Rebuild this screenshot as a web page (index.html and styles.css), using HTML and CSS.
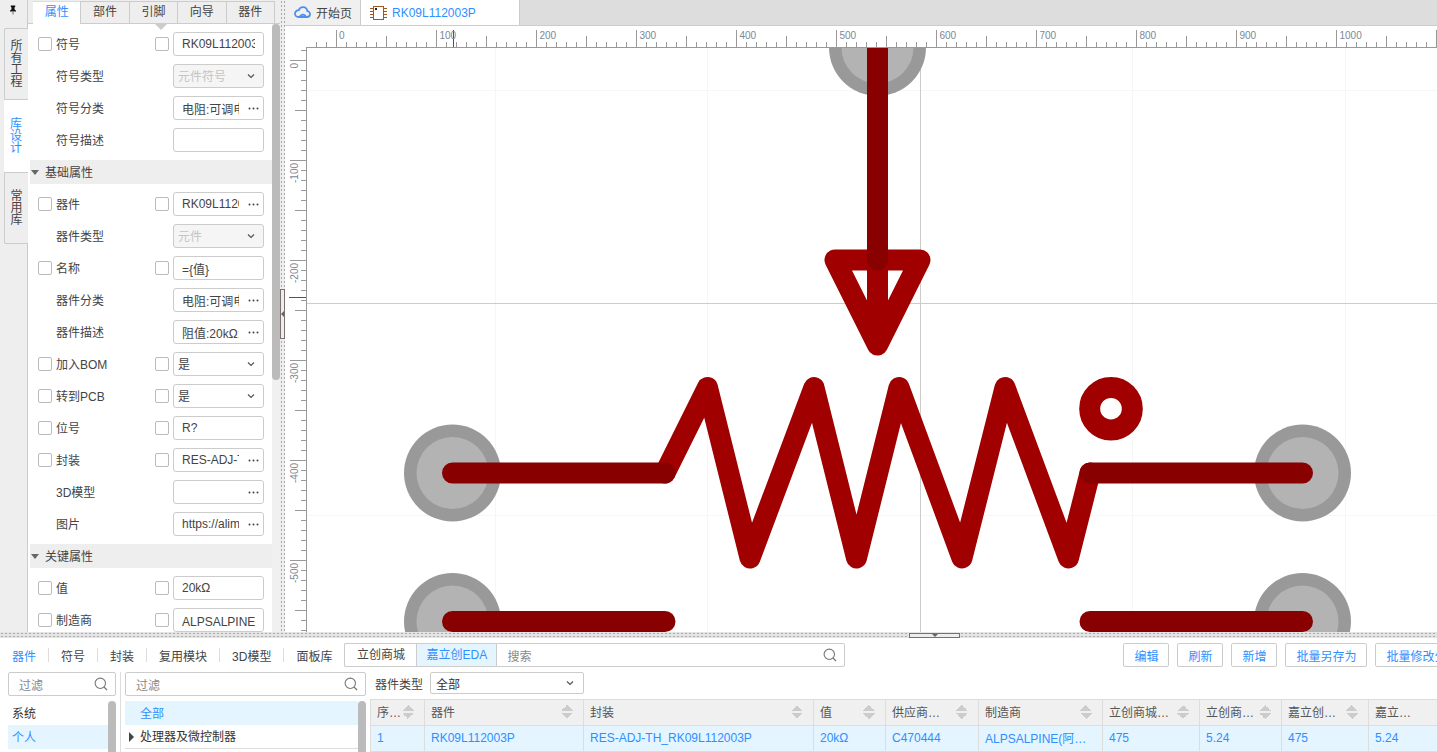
FILE: index.html
```html
<!DOCTYPE html>
<html lang="zh-CN">
<head>
    <meta charset="UTF-8">
    <title>RK09L112003P</title>
    <link rel="stylesheet" href="styles.css">
</head>
<body>
    <svg class="sprites" aria-hidden="true">
        <symbol id="chevron" viewBox="0 0 8 6"><path d="M1 1.5 4 4.5 7 1.5" fill="none" stroke="#555" stroke-width="1.2"/></symbol>
        <symbol id="dots" viewBox="0 0 11 3"><circle cx="1.5" cy="1.5" r="1" fill="#444"/><circle cx="5.5" cy="1.5" r="1" fill="#444"/><circle cx="9.5" cy="1.5" r="1" fill="#444"/></symbol>
        <symbol id="search" viewBox="0 0 14 14"><circle cx="6.3" cy="6.3" r="5.2" fill="none" stroke="#777" stroke-width="1.1"/><path d="M10 10 13 13" stroke="#777" stroke-width="1.3"/></symbol>
    </svg>

    <div class="top">
        <div class="rail">
            <div class="pin">
                <svg width="6" height="10" viewBox="0 0 8 12"><path d="M1 0H7V1.5L6 2.5V5L8 7V8H0V7L2 5V2.5L1 1.5Z" fill="#111"/><rect x="3" y="8" width="2" height="4" fill="#999"/></svg>
            </div>
            <div class="rail-tab">所有工程</div>
            <div class="rail-tab active">库设计</div>
            <div class="rail-tab">常用库</div>
        </div>

        <div class="props">
            <div class="props-tabs">
                <div class="ptab active">属性</div>
                <div class="ptab">部件</div>
                <div class="ptab">引脚</div>
                <div class="ptab">向导</div>
                <div class="ptab">器件</div>
            </div>
            <div class="tab-caret"></div>
            <div class="props-scroll"><div class="props-thumb"></div></div>
            <div class="props-body">
                <div class="row"><span class="cb"></span><span class="lbl">符号</span><span class="cb cb2"></span><div class="field"><span class="val wide">RK09L112003P</span></div></div>
                <div class="row"><span class="lbl">符号类型</span><div class="field disabled"><span class="val sel">元件符号</span><svg class="chev"><use href="#chevron"/></svg></div></div>
                <div class="row"><span class="lbl">符号分类</span><div class="field"><span class="val">电阻:可调电位器</span><svg class="dots"><use href="#dots"/></svg></div></div>
                <div class="row"><span class="lbl">符号描述</span><div class="field"></div></div>

                <div class="section"><i class="tri"></i><span>基础属性</span></div>
                <div class="row"><span class="cb"></span><span class="lbl">器件</span><span class="cb cb2"></span><div class="field"><span class="val">RK09L112003P</span><svg class="dots"><use href="#dots"/></svg></div></div>
                <div class="row"><span class="lbl">器件类型</span><div class="field disabled"><span class="val sel">元件</span><svg class="chev"><use href="#chevron"/></svg></div></div>
                <div class="row"><span class="cb"></span><span class="lbl">名称</span><span class="cb cb2"></span><div class="field"><span class="val wide">={值}</span></div></div>
                <div class="row"><span class="lbl">器件分类</span><div class="field"><span class="val">电阻:可调电位器</span><svg class="dots"><use href="#dots"/></svg></div></div>
                <div class="row"><span class="lbl">器件描述</span><div class="field"><span class="val">阻值:20kΩ;功率</span><svg class="dots"><use href="#dots"/></svg></div></div>
                <div class="row"><span class="cb"></span><span class="lbl">加入BOM</span><span class="cb cb2"></span><div class="field"><span class="val sel">是</span><svg class="chev"><use href="#chevron"/></svg></div></div>
                <div class="row"><span class="cb"></span><span class="lbl">转到PCB</span><span class="cb cb2"></span><div class="field"><span class="val sel">是</span><svg class="chev"><use href="#chevron"/></svg></div></div>
                <div class="row"><span class="cb"></span><span class="lbl">位号</span><span class="cb cb2"></span><div class="field"><span class="val wide">R?</span></div></div>
                <div class="row"><span class="cb"></span><span class="lbl">封装</span><span class="cb cb2"></span><div class="field"><span class="val">RES-ADJ-TH_RK09</span><svg class="dots"><use href="#dots"/></svg></div></div>
                <div class="row"><span class="lbl">3D模型</span><div class="field"><span class="val"></span><svg class="dots"><use href="#dots"/></svg></div></div>
                <div class="row"><span class="lbl">图片</span><div class="field"><span class="val">https://alimg.szlcsc.com</span><svg class="dots"><use href="#dots"/></svg></div></div>

                <div class="section"><i class="tri"></i><span>关键属性</span></div>
                <div class="row"><span class="cb"></span><span class="lbl">值</span><span class="cb cb2"></span><div class="field"><span class="val wide">20kΩ</span></div></div>
                <div class="row"><span class="cb"></span><span class="lbl">制造商</span><span class="cb cb2"></span><div class="field"><span class="val wide">ALPSALPINE(阿尔卑斯)</span></div></div>
            </div>
        </div>

        <div class="vsplit"><div class="vhandle"><i></i></div></div>

        <div class="editor">
            <div class="doc-tabs">
                <div class="doc-tab">
                    <svg width="17" height="13" viewBox="0 0 17 13"><path d="M4.5 11H13C15 11 16 9.6 16 8 16 6.4 14.8 5.2 13.4 5.2 13 2.8 11.2 1.2 9 1.2 7 1.2 5.4 2.4 4.8 4.2 2.6 4.2 1 5.8 1 7.8 1 9.6 2.6 11 4.5 11 6.4 11 7.2 8.6 9 8.6 10.4 8.6 10.8 9.6 11.6 10" fill="none" stroke="#4d8ff0" stroke-width="1.8" stroke-linecap="round"/></svg>
                    <span>开始页</span>
                </div>
                <div class="doc-tab active">
                    <svg width="17" height="14" viewBox="0 0 17 14"><rect x="3.5" y="0.5" width="10" height="13" fill="#fff" stroke="#a5561c"/><rect x="5" y="2" width="2" height="2" fill="#222"/><path d="M0 2.5H3M0 5.5H3M0 8.5H3M0 11.5H3M14 2.5H17M14 5.5H17M14 8.5H17M14 11.5H17" stroke="#a5561c"/></svg>
                    <span>RK09L112003P</span>
                </div>
            </div>
            <div class="canvas">
                <svg class="sheet" width="1152" height="606" viewBox="285 26 1152 606">
                    <defs>
                        <pattern id="htick" patternUnits="userSpaceOnUse" x="336" y="30" width="100" height="17">
                            <rect x="0" y="0" width="1" height="17"/><rect x="10" y="12" width="1" height="5"/><rect x="20" y="12" width="1" height="5"/><rect x="30" y="12" width="1" height="5"/><rect x="40" y="12" width="1" height="5"/><rect x="50" y="6" width="1" height="11"/><rect x="60" y="12" width="1" height="5"/><rect x="70" y="12" width="1" height="5"/><rect x="80" y="12" width="1" height="5"/><rect x="90" y="12" width="1" height="5"/>
                        </pattern>
                        <pattern id="vtick" patternUnits="userSpaceOnUse" x="290" y="60" width="16" height="100">
                            <rect x="0" y="0" width="16" height="1"/><rect x="11" y="10" width="5" height="1"/><rect x="11" y="20" width="5" height="1"/><rect x="11" y="30" width="5" height="1"/><rect x="11" y="40" width="5" height="1"/><rect x="5" y="50" width="11" height="1"/><rect x="11" y="60" width="5" height="1"/><rect x="11" y="70" width="5" height="1"/><rect x="11" y="80" width="5" height="1"/><rect x="11" y="90" width="5" height="1"/>
                        </pattern>
                    </defs>

                    <!-- grid -->
                    <path d="M495.5 48V632M707.5 48V632M1132.5 48V632M1345.5 48V632M307 90.5H1437M307 515.5H1437" stroke="#f6f6f6"/>
                    <path d="M920.5 48V632M307 303.5H1437" stroke="#ccc"/>

                    <!-- pads -->
                    <g class="pad"><circle cx="877.5" cy="47.5" r="48.5"/><circle class="pad-in" cx="877.5" cy="47.5" r="36"/></g>
                    <g class="pad"><circle cx="452.5" cy="473" r="48.5"/><circle class="pad-in" cx="452.5" cy="473" r="36"/></g>
                    <g class="pad"><circle cx="1302.5" cy="473" r="48.5"/><circle class="pad-in" cx="1302.5" cy="473" r="36"/></g>
                    <g class="pad"><circle cx="452.5" cy="621.5" r="48.5"/><circle class="pad-in" cx="452.5" cy="621.5" r="36"/></g>
                    <g class="pad"><circle cx="1302.5" cy="621.5" r="48.5"/><circle class="pad-in" cx="1302.5" cy="621.5" r="36"/></g>

                    <!-- symbol -->
                    <g class="wire">
                        <path d="M835 260H920L877.5 345ZM877.5 260V345"/>
                        <path d="M665 473 707.5 387.5 750 558 814 387.5 856.5 558 899 387.5 962 558 1005 387.5 1068.5 558 1090 473"/>
                        <circle cx="1111" cy="408.7" r="21.3"/>
                    </g>
                    <g class="pin-line">
                        <path d="M877.5 40V260M452.5 473H665M1090 473H1302.5M452.5 621.5H665M1090 621.5H1302.5"/>
                    </g>

                    <!-- rulers -->
                    <rect x="285" y="26" width="1152" height="22" fill="#fff"/>
                    <rect x="285" y="26" width="22" height="606" fill="#fff"/>
                    <rect class="tick" x="307" y="30" width="1130" height="17" fill="url(#htick)"/>
                    <rect class="tick" x="290" y="48" width="16" height="584" fill="url(#vtick)"/>
                    <rect x="306" y="47" width="1131" height="1" fill="#999"/>
                    <rect x="306" y="47" width="1" height="585" fill="#999"/>
                    <rect x="453" y="30" width="1" height="17" fill="#1560b0"/>
                    <rect x="289" y="297" width="17" height="1" fill="#1560b0"/>
                    <g class="rule-text">
                        <text x="339" y="39">0</text><text x="439.5" y="39">100</text><text x="539.5" y="39">200</text><text x="639.5" y="39">300</text><text x="739.5" y="39">400</text><text x="839.5" y="39">500</text><text x="939.5" y="39">600</text><text x="1039.5" y="39">700</text><text x="1139.5" y="39">800</text><text x="1239.5" y="39">900</text><text x="1339.5" y="39">1000</text>
                        <text text-anchor="end" transform="translate(298 63) rotate(-90)">0</text>
                        <text text-anchor="end" transform="translate(298 163) rotate(-90)">-100</text>
                        <text text-anchor="end" transform="translate(298 263) rotate(-90)">-200</text>
                        <text text-anchor="end" transform="translate(298 363) rotate(-90)">-300</text>
                        <text text-anchor="end" transform="translate(298 463) rotate(-90)">-400</text>
                        <text text-anchor="end" transform="translate(298 563) rotate(-90)">-500</text>
                    </g>
                </svg>
            </div>
        </div>
    </div>

    <div class="hsplit"><div class="hhandle"><i></i></div></div>

    <div class="bottom">
        <div class="lib-bar">
            <span class="lib-tab active">器件</span><i class="sep"></i>
            <span class="lib-tab">符号</span><i class="sep"></i>
            <span class="lib-tab">封装</span><i class="sep"></i>
            <span class="lib-tab">复用模块</span><i class="sep"></i>
            <span class="lib-tab">3D模型</span><i class="sep"></i>
            <span class="lib-tab">面板库</span>
            <div class="segment">
                <span class="seg">立创商城</span>
                <span class="seg active">嘉立创EDA</span>
                <div class="seg-search"><span class="ph">搜索</span><svg class="mag"><use href="#search"/></svg></div>
            </div>
            <div class="actions">
                <button class="btn">编辑</button>
                <button class="btn">刷新</button>
                <button class="btn">新增</button>
                <button class="btn">批量另存为</button>
                <button class="btn">批量修改分类</button>
            </div>
        </div>

        <div class="lib-body">
            <div class="col col-owner">
                <div class="filter"><span class="ph">过滤</span><svg class="mag"><use href="#search"/></svg></div>
                <div class="list">
                    <div class="list-item">系统</div>
                    <div class="list-item active">个人</div>
                    <div class="list-thumb"></div>
                </div>
            </div>
            <div class="col col-cat">
                <div class="filter"><span class="ph">过滤</span><svg class="mag"><use href="#search"/></svg></div>
                <div class="list">
                    <div class="list-item cat active">全部</div>
                    <div class="list-item cat sub"><i class="tri-right"></i><span>处理器及微控制器</span></div>
                    <div class="list-thumb"></div>
                </div>
            </div>
            <div class="col col-table">
                <div class="type-row">
                    <span>器件类型</span>
                    <div class="type-select"><span>全部</span><svg class="chev"><use href="#chevron"/></svg></div>
                </div>
                <div class="tbl">
                    <div class="tbl-row head">
                        <div class="cell">序…<i class="sort"></i></div>
                        <div class="cell">器件<i class="sort"></i></div>
                        <div class="cell">封装<i class="sort"></i></div>
                        <div class="cell">值<i class="sort"></i></div>
                        <div class="cell">供应商…<i class="sort"></i></div>
                        <div class="cell">制造商<i class="sort"></i></div>
                        <div class="cell">立创商城…<i class="sort"></i></div>
                        <div class="cell">立创商…<i class="sort"></i></div>
                        <div class="cell">嘉立创…<i class="sort"></i></div>
                        <div class="cell">嘉立…<i class="sort"></i></div>
                    </div>
                    <div class="tbl-row picked">
                        <div class="cell">1</div>
                        <div class="cell">RK09L112003P</div>
                        <div class="cell">RES-ADJ-TH_RK09L112003P</div>
                        <div class="cell">20kΩ</div>
                        <div class="cell">C470444</div>
                        <div class="cell">ALPSALPINE(阿…</div>
                        <div class="cell">475</div>
                        <div class="cell">5.24</div>
                        <div class="cell">475</div>
                        <div class="cell">5.24</div>
                    </div>
                </div>
            </div>
        </div>
    </div>
</body>
</html>
```

FILE: styles.css
```css
* {box-sizing: border-box;}
html, body {margin: 0; height: 100%;}
body {width: 1437px; height: 752px; overflow: hidden; background: #fff; color: #444; font: 12px "Liberation Sans", "Noto Sans CJK SC", sans-serif; display: flex; flex-direction: column;}
i {display: block; font-style: normal;}
.sprites {position: absolute; width: 0; height: 0;}

.top {display: flex; height: 632px; flex: none;}

/* left rail */
.rail {width: 28px; flex: none; background: #eee; border-right: 1px solid #ccc;}
.pin {height: 28px; display: flex; justify-content: center; padding-top: 5px; padding-right: 2px;}
.rail-tab {width: 24px; margin-left: 4px; height: 72px; margin-right: -1px; display: flex; align-items: center; justify-content: center; text-align: center; padding: 0 6px; line-height: 12px; word-break: break-all; border: 1px solid #ccc; border-right: 0; border-radius: 2px 0 0 2px; background: #eee;}
.rail-tab.active {background: #fff; color: #2f8fff; border: 0; margin-right: -1px; position: relative;}

/* properties */
.props {width: 252px; flex: none; position: relative; overflow: hidden; background: #fff;}
.props-tabs {display: flex; height: 24px; background: #eee; border-bottom: 1px solid #ccc; padding: 1px 0 0 5px;}
.ptab {width: 48.4px; height: 23px; line-height: 21px; text-align: center; border: 1px solid #ccc; border-left: 0; background: #eee; flex: none;}
.ptab.active {background: #fff; color: #2f8fff; border-bottom: 0; border-top-color: #ddd;}
.tab-caret {position: absolute; left: 127px; top: 24px; border: 6px solid transparent; border-top-color: #ccc; border-bottom: 0;}
.props-scroll {position: absolute; right: 0; top: 24px; bottom: 0; width: 8px; background: #f0f0f0;}
.props-thumb {height: 356px; background: #bbb; border-radius: 4px;}
.props-body {padding: 4px 8px 0 2px;}

.row {display: grid; grid-template-columns: 14px 95px 14px 91px; column-gap: 4px; align-items: center; height: 32px; padding-left: 8px;}
.cb {width: 14px; height: 14px; background: #fff; border: 1px solid #bbb; border-radius: 2px; grid-column: 1;}
.cb2 {grid-column: 3;}
.lbl {grid-column: 2; white-space: nowrap; margin-bottom: 2px;}
.field {grid-column: 4; height: 24px; display: flex; align-items: center; background: #fff; border: 1px solid #ccc; border-radius: 3px; padding-left: 8px; padding-right: 4px;}
.val {flex: 1; min-width: 0; overflow: hidden; white-space: nowrap; margin-right: 9px;}
.val.wide {margin-right: 4px;}
.val.sel {margin-left: -4px; margin-bottom: 1px;}
.dots {width: 11px; height: 3px; flex: none;}
.chev {width: 8px; height: 6px; flex: none; margin-right: 4px;}
.field.disabled {background: #f5f5f5; color: #c4c4c4;}
.section {display: flex; align-items: center; height: 24px; margin: 4px 0; background: #eee; padding-left: 1px;}
.section span {margin-bottom: 2px;}
.tri {border: 4px solid transparent; border-top: 5px solid #666; border-bottom: 0; margin-right: 6px;}

/* splitters */
.vsplit {width: 5px; flex: none; background: radial-gradient(#aaa 0.7px, transparent 0.8px) 0 0 / 3px 4px #eee; position: relative;}
.vhandle {position: absolute; left: 0; top: 289px; width: 5px; height: 50px; background: #eee; border: 1px solid #7a6e6e; display: flex; align-items: center; justify-content: center;}
.vhandle i {border: 3px solid transparent; border-right: 3px solid #666; border-left: 0;}
.hsplit {height: 6px; flex: none; position: relative; background: radial-gradient(#aaa 0.7px, transparent 0.8px) 0 0 / 4px 3px #e4e4e4;}
.hhandle {position: absolute; left: 909px; top: 1px; width: 51px; height: 5px; background: #eee; border: 1px solid #7a6e6e; display: flex; justify-content: center;}
.hhandle i {border: 3px solid transparent; border-top: 3px solid #666; border-bottom: 0;}

/* editor */
.editor {flex: 1; min-width: 0; display: flex; flex-direction: column;}
.doc-tabs {display: flex; height: 26px; flex: none; background: #ddd; border-bottom: 1px solid #ccc;}
.doc-tab {display: flex; align-items: center; height: 25px; gap: 5px; background: #f0f0f0; width: 76px; padding-left: 9px; border-right: 1px solid #ccc; color: #444;}
.doc-tab.active {width: 159px; background: #fff; color: #2f8fff;}
.canvas {flex: 1; overflow: hidden; background: #fff;}
.sheet {display: block;}
.pad circle {fill: #999;}
.pad .pad-in {fill: #b3b3b3;}
.wire {fill: none; stroke: #a00000; stroke-width: 21; stroke-linecap: round; stroke-linejoin: round;}
.pin-line {fill: none; stroke: #880000; stroke-width: 21; stroke-linecap: round;}
#htick rect, #vtick rect {fill: #999;}
.rule-text {font: 10px "Liberation Sans", sans-serif; fill: #7c8896;}

/* library panel */
.bottom {flex: 1; min-height: 0; display: flex; flex-direction: column; overflow: hidden; background: #fff;}
.lib-bar {display: flex; align-items: center; height: 24px; margin-top: 5px; padding-left: 12px; flex: none; white-space: nowrap;}
.lib-tab {flex: none;}
.lib-tab.active {color: #2f8fff;}
.sep {width: 1px; height: 14px; flex: none; background: #ddd; margin: 0 12px;}
.segment {display: flex; height: 24px; margin-left: 12px; flex: none;}
.seg {width: 72px; line-height: 22px; text-align: center; border: 1px solid #ccc; border-right: 0; border-radius: 2px 0 0 2px;}
.seg.active {width: 80px; background: #e5f5ff; color: #2f8fff; border-radius: 0;}
.seg-search {width: 349px; display: flex; align-items: center; justify-content: space-between; border: 1px solid #ccc; border-radius: 0 2px 2px 0; padding: 0 7px 0 10px;}
.ph {color: #888;}
.mag {width: 14px; height: 14px; flex: none;}
.actions {display: flex; gap: 8px; margin-left: 278px; flex: none;}
.btn {height: 24px; padding: 0 10px; background: #fff; border: 1px solid #ccc; border-radius: 2px; color: #2f8fff; font: inherit; flex: none;}

.lib-body {display: flex; flex: 1; min-height: 0; margin-top: 5px;}
.col {display: flex; flex-direction: column; flex: none;}
.col-owner {width: 113px; margin-left: 8px; padding-right: 4px; border-right: 1px solid #ddd; margin-right: 4px;}
.col-cat {width: 241px; margin-right: 4px;}
.col-owner .filter {width: 108px;}
.filter {height: 24px; display: flex; align-items: center; justify-content: space-between; border: 1px solid #ccc; border-radius: 2px; padding: 0 7px 0 10px; flex: none;}
.list {position: relative; margin-top: 5px; flex: 1; overflow: hidden;}
.list-item {height: 24px; line-height: 26px; padding-left: 4px; color: #333; margin-right: 8px;}
.list-item.active {background: #e5f5ff; color: #2f8fff;}
.list-item.cat {padding-left: 15px;}
.list-item.sub {display: flex; align-items: center; padding-left: 4px; border-bottom: 1px solid #ddd; gap: 6px;}
.list-item.sub span {line-height: 24px;}
.tri-right {border: 5px solid transparent; border-left: 5px solid #444; border-right: 0;}
.list-thumb {position: absolute; right: 0; top: 0; bottom: 0; width: 8px; background: #bbb; border-radius: 4px 4px 0 0;}

.col-table {flex: 1; min-width: 0; overflow: hidden;}
.type-row {display: flex; align-items: center; gap: 7px; height: 22px; padding-left: 5px; flex: none;}
.type-select {width: 154px; height: 22px; display: flex; align-items: center; justify-content: space-between; border: 1px solid #ccc; border-radius: 2px; padding: 0 5px 0 5px; color: #333;}
.tbl {width: 1100px; margin-top: 5px; border-top: 1px solid #ddd; border-left: 1px solid #ddd;}
.tbl-row {display: grid; grid-template-columns: 54px 159px 230px 72px 93px 124px 97px 82px 87px 100px; height: 26px; border-bottom: 1px solid #ddd;}
.cell {display: flex; align-items: center; justify-content: space-between; padding: 0 10px 2px 6px; border-right: 1px solid #ddd; white-space: nowrap; overflow: hidden;}
.head {background: #f0f0f0; color: #555;}
.picked {background: #e5f5ff; color: #2f8fff;}
.sort {width: 12px; height: 14px; flex: none; background: linear-gradient(to bottom right, transparent 50%, #ccc 50%) 0 0 / 6px 6px no-repeat, linear-gradient(to bottom left, transparent 50%, #ccc 50%) 6px 0 / 6px 6px no-repeat, linear-gradient(to top right, transparent 50%, #ccc 50%) 0 8px / 6px 6px no-repeat, linear-gradient(to top left, transparent 50%, #ccc 50%) 6px 8px / 6px 6px no-repeat;}
```
